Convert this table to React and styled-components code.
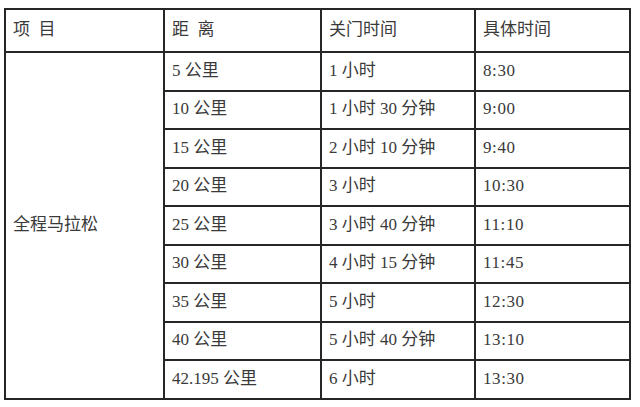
import React from 'react';
import styled, { createGlobalStyle } from 'styled-components';

const GlobalStyle = createGlobalStyle`
    html, body {
        margin: 0;
        background: #fff;
    }
`;

const Page = styled.div`
    padding: 8px 0 0 4px;
`;

const Table = styled.table`
    width: 625px;
    height: 390px;
    border-collapse: collapse;
    table-layout: fixed;
    font-family: "Liberation Serif", "Noto Sans CJK SC", serif;
    font-size: 17px;
    color: #3a3a3a;
`;

const Row = styled.tr`
    height: ${props => props.head ? 43 : 38.5}px;
`;

const Cell = styled.td`
    border: 2px solid #262626;
    padding: 0 0 2px 7px;
    vertical-align: middle;
    white-space: nowrap;
    line-height: 1;
`;

// times are set with a little spacing, as in the source document
const Time = styled.span`
    letter-spacing: 0.6px;
`;

const rows = [
    ['5 公里', '1 小时', '8:30'],
    ['10 公里', '1 小时 30 分钟', '9:00'],
    ['15 公里', '2 小时 10 分钟', '9:40'],
    ['20 公里', '3 小时', '10:30'],
    ['25 公里', '3 小时 40 分钟', '11:10'],
    ['30 公里', '4 小时 15 分钟', '11:45'],
    ['35 公里', '5 小时', '12:30'],
    ['40 公里', '5 小时 40 分钟', '13:10'],
    ['42.195 公里', '6 小时', '13:30'],
];

export default function App() {
    return (
        <Page>
            <GlobalStyle />
            <Table>
                <colgroup>
                    <col style={{ width: 159 }} />
                    <col style={{ width: 157 }} />
                    <col style={{ width: 154 }} />
                    <col style={{ width: 155 }} />
                </colgroup>
                <tbody>
                    {/* header row */}
                    <Row head>
                        <Cell>项&nbsp;&nbsp;目</Cell>
                        <Cell>距&nbsp;&nbsp;离</Cell>
                        <Cell>关门时间</Cell>
                        <Cell>具体时间</Cell>
                    </Row>
                    {rows.map((r, i) => (
                        <Row key={r[0]}>
                            {i === 0 && <Cell rowSpan={rows.length}>全程马拉松</Cell>}
                            <Cell>{r[0]}</Cell>
                            <Cell>{r[1]}</Cell>
                            <Cell><Time>{r[2]}</Time></Cell>
                        </Row>
                    ))}
                </tbody>
            </Table>
        </Page>
    );
}
